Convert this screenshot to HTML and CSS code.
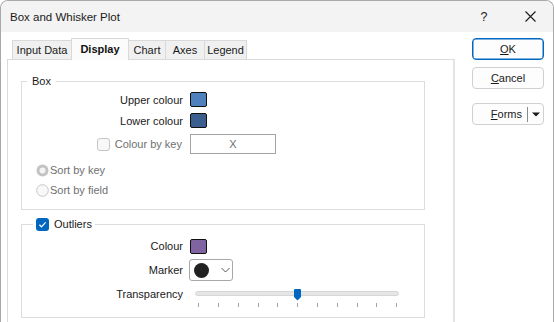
FILE: index.html
```html
<!DOCTYPE html>
<html>
<head>
<meta charset="utf-8">
<title>Box and Whisker Plot</title>
<link rel="stylesheet" href="styles.css">
</head>
<body>
<div class="window">
  <div class="titlebar">
    <span class="title">Box and Whisker Plot</span>
    <span class="capbtn help">?</span>
    <span class="capbtn close">
      <svg width="11" height="11" viewBox="0 0 11 11"><path d="M0.5 0.5 L10.5 10.5 M10.5 0.5 L0.5 10.5" stroke="#1a1a1a" stroke-width="1.1" fill="none"/></svg>
    </span>
  </div>
  <div class="content">
    <div class="tabs-area">
      <div class="tabstrip">
        <div class="tab t-input">Input Data</div>
        <div class="tab active t-display">Display</div>
        <div class="tab t-chart">Chart</div>
        <div class="tab t-axes">Axes</div>
        <div class="tab t-legend">Legend</div>
      </div>
      <div class="panel">
        <fieldset class="group box-group">
          <legend class="legend-box">Box</legend>
          <div class="row first">
            <span class="lbl">Upper colour</span>
            <span class="swatch upper"></span>
          </div>
          <div class="row">
            <span class="lbl">Lower colour</span>
            <span class="swatch lower"></span>
          </div>
          <div class="row keyrow">
            <span class="lbl disabled"><span class="check off"></span><span class="keytext">Colour by key</span></span>
            <span class="textbox">X</span>
          </div>
          <div class="row radio-row first-radio">
            <svg class="radio" width="13" height="13" viewBox="0 0 13 13"><circle cx="6.5" cy="6.5" r="6" fill="#c3c3c3"/><circle cx="6.5" cy="6.5" r="3" fill="#f4f4f4"/></svg>
            <span class="disabled">Sort by key</span>
          </div>
          <div class="row radio-row">
            <svg class="radio" width="13" height="13" viewBox="0 0 13 13"><circle cx="6.5" cy="6.5" r="5.8" fill="#f8f8f8" stroke="#c6c6c6" stroke-width="1"/></svg>
            <span class="disabled">Sort by field</span>
          </div>
        </fieldset>

        <fieldset class="group outliers-group">
          <legend class="legend-outliers">
            <span class="check on"><svg width="13" height="13" viewBox="0 0 13 13"><path d="M3.4 6.8 L5.5 8.8 L9.6 4.4" stroke="#fff" stroke-width="1.2" fill="none"/></svg></span>
            <span>Outliers</span>
          </legend>
          <div class="row colour-row">
            <span class="lbl">Colour</span>
            <span class="swatch purple"></span>
          </div>
          <div class="row marker-row">
            <span class="lbl">Marker</span>
            <span class="combo">
              <span class="dot"></span>
              <svg class="chev" width="9" height="6" viewBox="0 0 9 6"><path d="M0.5 1 L4.5 5 L8.5 1" stroke="#555" stroke-width="1" fill="none"/></svg>
            </span>
          </div>
          <div class="row trans-row">
            <span class="lbl">Transparency</span>
            <svg class="slider" width="212" height="24" viewBox="0 0 212 24">
              <rect x="5.5" y="7.5" width="203" height="4" rx="2" fill="#e6e6e6" stroke="#d6d6d6"/>
              <g stroke="#a4a4a4" stroke-width="1">
                <line x1="8.5" y1="19" x2="8.5" y2="23"/>
                <line x1="28.5" y1="19" x2="28.5" y2="23"/>
                <line x1="48.5" y1="19" x2="48.5" y2="23"/>
                <line x1="68.5" y1="19" x2="68.5" y2="23"/>
                <line x1="87.5" y1="19" x2="87.5" y2="23"/>
                <line x1="107.5" y1="19" x2="107.5" y2="23"/>
                <line x1="127.5" y1="19" x2="127.5" y2="23"/>
                <line x1="147.5" y1="19" x2="147.5" y2="23"/>
                <line x1="167.5" y1="19" x2="167.5" y2="23"/>
                <line x1="186.5" y1="19" x2="186.5" y2="23"/>
                <line x1="206.5" y1="19" x2="206.5" y2="23"/>
              </g>
              <path d="M104 6 Q104 5 105 5 L110 5 Q111 5 111 6 L111 13 L107.5 16.5 L104 13 Z" fill="#0067c0"/>
            </svg>
          </div>
        </fieldset>
      </div>
    </div>
    <div class="buttons">
      <div class="btn default"><span><u>O</u>K</span></div>
      <div class="btn cancel"><span><u>C</u>ancel</span></div>
      <div class="btn forms">
        <span class="forms-main"><u>F</u>orms</span>
        <span class="divider"></span>
        <span class="forms-arrow"><svg width="8" height="5" viewBox="0 0 8 5"><path d="M0 0.5 L8 0.5 L4 4.5 Z" fill="#1a1a1a"/></svg></span>
      </div>
    </div>
  </div>
</div>
</body>
</html>
```

FILE: styles.css
```css
* { box-sizing: border-box; }
html, body { margin: 0; padding: 0; }
body {
  font-family: "Liberation Sans", Arial, sans-serif;
  font-size: 11px;
  color: #1a1a1a;
  background: #ffffff;
  width: 554px;
  height: 322px;
  overflow: hidden;
}
.window {
  width: 554px;
  height: 322px;
  border: 1px solid #a9a9a9;
  border-bottom: none;
  border-radius: 8px 8px 0 0;
  overflow: hidden;
  background: #ffffff;
  display: flex;
  flex-direction: column;
}
.titlebar {
  height: 31px;
  flex: none;
  background: #f3f3f3;
  display: flex;
  align-items: center;
}
.title {
  flex: 1;
  padding-left: 9px;
  font-size: 11.5px;
  color: #1a1a1a;
}
.capbtn {
  width: 46px;
  height: 31px;
  display: flex;
  align-items: center;
  justify-content: center;
}
.help { font-size: 12.5px; }

.content {
  flex: 1;
  display: flex;
  min-height: 0;
}
.tabs-area {
  flex: none;
  width: 448px;
  margin-left: 6px;
  padding-top: 6px;
  display: flex;
  flex-direction: column;
}
.tabstrip {
  flex: none;
  height: 21px;
  display: flex;
  align-items: flex-end;
  padding-left: 5px;
}
.tab {
  height: 19px;
  line-height: 18px;
  padding: 0;
  text-align: center;
  border: 1px solid #d9d9d9;
  border-bottom: none;
  background: #f0f0f0;
  margin-right: -1px;
  color: #1a1a1a;
  flex: none;
}
.t-input { width: 60px; }
.t-display { width: 58px; }
.t-chart { width: 38px; }
.t-axes { width: 40px; }
.t-legend { width: 43px; }
.tab.active {
  position: relative;
  z-index: 2;
  height: 22px;
  line-height: 21px;
  margin-bottom: -1px;
  background: #fbfbfb;
  font-weight: bold;
  color: #111;
}
.panel {
  flex: 1;
  border: 1px solid #dadada;
  border-right: 2px solid #e4e4e4;
  border-bottom: none;
  padding-left: 13px;
}

.group {
  width: 404px;
  margin: 0;
  padding: 0 0 9px 0;
  border: 1px solid #dcdcdc;
  min-width: 0;
}
.box-group { margin-top: 14px; }
.outliers-group { margin-top: 7px; }
legend {
  line-height: 14px;
  height: 14px;
}
.legend-box {
  margin-left: 5px;
  padding: 0 5px;
}
.legend-outliers {
  margin-left: 11px;
  padding: 0 3px;
  display: flex;
  align-items: center;
  gap: 5px;
}

.row {
  display: flex;
  align-items: center;
  height: 21px;
}
.row.first { margin-top: 1px; }
.lbl {
  flex: none;
  width: 168px;
  padding-right: 7px;
  text-align: right;
}
.disabled { color: #6f6f6f; }
.swatch {
  width: 17px;
  height: 15px;
  border: 1px solid #111;
  border-radius: 2px;
}
.swatch.upper { background: #4f81bd; }
.swatch.lower { background: #3a5f8e; }
.swatch.purple { background: #8064a2; }

.keyrow {
  margin-top: 3px;
  height: 20px;
}
.keyrow .lbl {
  display: flex;
  align-items: center;
  justify-content: flex-end;
  padding-right: 8px;
}
.keytext { margin-left: 5px; }
.check {
  width: 13px;
  height: 13px;
  border-radius: 3px;
  flex: none;
  display: block;
}
.check.off {
  border: 1px solid #c6c6c6;
  background: #f8f8f8;
}
.check.on {
  background: #0067c0;
}
.check.on svg { display: block; }
.textbox {
  width: 86px;
  height: 20px;
  border: 1px solid #a3a3a3;
  color: #6f6f6f;
  text-align: center;
  line-height: 18px;
}
.radio-row {
  height: 20px;
  padding-left: 14px;
  gap: 1px;
}
.radio { flex: none; display: block; }
.first-radio { margin-top: 6px; }

.colour-row {
  margin-top: 5px;
  height: 20px;
}
.marker-row {
  margin-top: 2px;
  height: 24px;
}
.combo {
  width: 44px;
  height: 22px;
  border: 1px solid #a8a8a8;
  border-radius: 3px;
  display: flex;
  align-items: center;
  padding-left: 4px;
  margin-left: -1px;
}
.dot {
  width: 15px;
  height: 15px;
  border-radius: 50%;
  background: #222;
}
.chev { margin-left: 12px; display: block; }
.trans-row {
  margin-top: 2px;
  height: 24px;
  align-items: flex-start;
}
.trans-row .lbl { line-height: 20px; }
.slider { display: block; flex: none; }

.buttons {
  flex: none;
  margin-left: 17px;
  width: 72px;
  display: flex;
  flex-direction: column;
}
.btn {
  height: 22px;
  border: 1px solid #d0d0d0;
  border-radius: 4px;
  background: #fdfdfd;
  display: flex;
  align-items: center;
  justify-content: center;
  color: #1a1a1a;
}
.btn.default {
  margin-top: 6px;
  border-color: #0067c0;
  box-shadow: inset 0 0 0 0.5px #0067c0;
}
.btn.cancel { margin-top: 7px; }
.btn.forms {
  margin-top: 14px;
  justify-content: flex-start;
}
.forms-main {
  width: 54px;
  text-align: right;
  padding-right: 5px;
}
.divider {
  width: 1px;
  height: 15px;
  background: #8a8a8a;
}
.forms-arrow {
  flex: 1;
  display: flex;
  justify-content: center;
  align-items: center;
}
.forms-arrow svg { display: block; }
```
